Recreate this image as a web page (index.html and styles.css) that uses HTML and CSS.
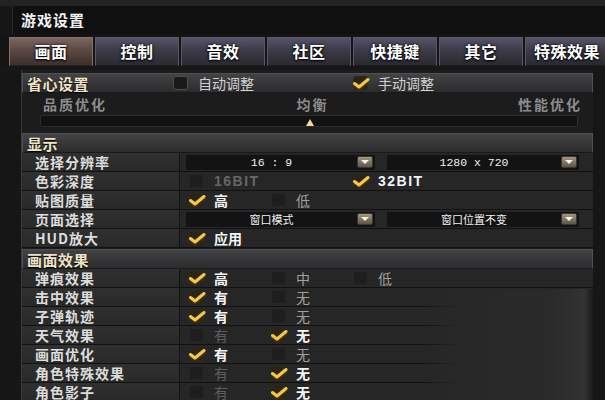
FILE: index.html
```html
<!DOCTYPE html>
<html lang="zh-CN">
<head>
    <meta charset="UTF-8">
    <title>游戏设置</title>
    <link rel="stylesheet" href="styles.css">
</head>
<body>
    <div class="top-strip"></div>
    <div class="titlebar">游戏设置</div>

    <nav class="tabs">
        <div class="tab active">画面</div>
        <div class="tab">控制</div>
        <div class="tab">音效</div>
        <div class="tab">社区</div>
        <div class="tab">快捷键</div>
        <div class="tab">其它</div>
        <div class="tab">特殊效果</div>
    </nav>

    <div class="panel">
        <!-- 省心设置 -->
        <div class="head">
            <div class="head-title">省心设置</div>
            <div class="opt head-opt"><span class="box"></span><span class="off-light">自动调整</span></div>
            <div class="opt head-opt"><span class="box on"><svg class="tick" viewBox="0 0 18 12" width="18" height="12"><path d="M2.5 6.5 L7 10 L16 2.5"/></svg></span><span class="off-light">手动调整</span></div>
        </div>
        <div class="slider">
            <div class="slider-labels">
                <span>品质优化</span>
                <span>均衡</span>
                <span>性能优化</span>
            </div>
            <div class="track"><span class="marker"></span></div>
        </div>

        <!-- 显示 -->
        <div class="head"><div class="head-title">显示</div></div>
        <div class="row">
            <div class="row-label">选择分辨率</div>
            <div class="row-value select">
                <div class="dropdown"><span class="dd-text mono">16 : 9</span><span class="arrow"></span></div>
                <div class="dropdown wide"><span class="dd-text mono">1280 x 720</span><span class="arrow"></span></div>
            </div>
        </div>
        <div class="row">
            <div class="row-label">色彩深度</div>
            <div class="row-value">
                <div class="opt double"><span class="box"></span><span class="bit off">16BIT</span></div>
                <div class="opt"><span class="box on"><svg class="tick" viewBox="0 0 18 12" width="18" height="12"><path d="M2.5 6.5 L7 10 L16 2.5"/></svg></span><span class="bit on-text">32BIT</span></div>
            </div>
        </div>
        <div class="row">
            <div class="row-label">贴图质量</div>
            <div class="row-value">
                <div class="opt"><span class="box on"><svg class="tick" viewBox="0 0 18 12" width="18" height="12"><path d="M2.5 6.5 L7 10 L16 2.5"/></svg></span><span class="on-text">高</span></div>
                <div class="opt"><span class="box"></span><span class="off-light">低</span></div>
            </div>
        </div>
        <div class="row">
            <div class="row-label">页面选择</div>
            <div class="row-value select">
                <div class="dropdown"><span class="dd-text small">窗口模式</span><span class="arrow"></span></div>
                <div class="dropdown wide"><span class="dd-text small">窗口位置不变</span><span class="arrow"></span></div>
            </div>
        </div>
        <div class="row">
            <div class="row-label">HUD放大</div>
            <div class="row-value">
                <div class="opt"><span class="box on"><svg class="tick" viewBox="0 0 18 12" width="18" height="12"><path d="M2.5 6.5 L7 10 L16 2.5"/></svg></span><span class="on-text">应用</span></div>
            </div>
        </div>

        <!-- 画面效果 -->
        <div class="head head-gap"><div class="head-title">画面效果</div></div>
        <div class="effects">
            <div class="row">
                <div class="row-label">弹痕效果</div>
                <div class="row-value">
                    <div class="opt"><span class="box on"><svg class="tick" viewBox="0 0 18 12" width="18" height="12"><path d="M2.5 6.5 L7 10 L16 2.5"/></svg></span><span class="on-text">高</span></div>
                    <div class="opt"><span class="box"></span><span class="off-light">中</span></div>
                    <div class="opt"><span class="box"></span><span class="off-light">低</span></div>
                </div>
            </div>
            <div class="row">
                <div class="row-label">击中效果</div>
                <div class="row-value">
                    <div class="opt"><span class="box on"><svg class="tick" viewBox="0 0 18 12" width="18" height="12"><path d="M2.5 6.5 L7 10 L16 2.5"/></svg></span><span class="on-text">有</span></div>
                    <div class="opt"><span class="box"></span><span class="off-light">无</span></div>
                </div>
            </div>
            <div class="row">
                <div class="row-label">子弹轨迹</div>
                <div class="row-value">
                    <div class="opt"><span class="box on"><svg class="tick" viewBox="0 0 18 12" width="18" height="12"><path d="M2.5 6.5 L7 10 L16 2.5"/></svg></span><span class="on-text">有</span></div>
                    <div class="opt"><span class="box"></span><span class="off-light">无</span></div>
                </div>
            </div>
            <div class="row">
                <div class="row-label">天气效果</div>
                <div class="row-value">
                    <div class="opt"><span class="box"></span><span class="off">有</span></div>
                    <div class="opt"><span class="box on"><svg class="tick" viewBox="0 0 18 12" width="18" height="12"><path d="M2.5 6.5 L7 10 L16 2.5"/></svg></span><span class="on-text">无</span></div>
                </div>
            </div>
            <div class="row">
                <div class="row-label">画面优化</div>
                <div class="row-value">
                    <div class="opt"><span class="box on"><svg class="tick" viewBox="0 0 18 12" width="18" height="12"><path d="M2.5 6.5 L7 10 L16 2.5"/></svg></span><span class="on-text">有</span></div>
                    <div class="opt"><span class="box"></span><span class="off-light">无</span></div>
                </div>
            </div>
            <div class="row">
                <div class="row-label">角色特殊效果</div>
                <div class="row-value">
                    <div class="opt"><span class="box"></span><span class="off">有</span></div>
                    <div class="opt"><span class="box on"><svg class="tick" viewBox="0 0 18 12" width="18" height="12"><path d="M2.5 6.5 L7 10 L16 2.5"/></svg></span><span class="on-text">无</span></div>
                </div>
            </div>
            <div class="row">
                <div class="row-label">角色影子</div>
                <div class="row-value">
                    <div class="opt"><span class="box"></span><span class="off">有</span></div>
                    <div class="opt"><span class="box on"><svg class="tick" viewBox="0 0 18 12" width="18" height="12"><path d="M2.5 6.5 L7 10 L16 2.5"/></svg></span><span class="on-text">无</span></div>
                </div>
            </div>
            <div class="blur"></div>
        </div>
    </div>
</body>
</html>
```

FILE: styles.css
```css
* {
    margin: 0;
    padding: 0;
    box-sizing: border-box;
}

body {
    width: 605px;
    height: 400px;
    overflow: hidden;
    background: #161616;
    font-family: "Noto Sans CJK SC", "Noto Sans", sans-serif;
    color: #ddd;
}

.top-strip {
    height: 6px;
    background: #232323;
}

.titlebar {
    height: 28px;
    margin-left: 12px;
    padding-left: 8px;
    background: #101010;
    border-left: 1px solid #2a2a2a;
    color: #f2f2f2;
    font-size: 15px;
    font-weight: bold;
    line-height: 28px;
    letter-spacing: 1px;
}

/* tabs */
.tabs {
    display: flex;
    gap: 2px;
    padding: 3px 0 0 9px;
    background: #141414;
}

.tab {
    flex: 0 0 84px;
    height: 29px;
    border: 1px solid #5b5966;
    border-bottom-color: #1e1e22;
    background: linear-gradient(#56536a 0%, #3d3b48 45%, #2a2930 100%);
    color: #fff;
    font-size: 16px;
    font-weight: bold;
    text-align: center;
    line-height: 27px;
    letter-spacing: 0.5px;
    text-shadow: 0 1px 2px #000, 0 0 3px #000;
}

.tab.active {
    border-color: #86706a;
    border-bottom-color: #2a2020;
    background: linear-gradient(#7d6660 0%, #5c4843 45%, #3c2f2c 100%);
}

/* main panel */
.panel {
    margin: 4px 12px 0 21px;
    border-left: 1px solid #3a3a3a;
    background: #1c1c1c;
    padding-top: 3px;
}

.head {
    height: 20px;
    display: flex;
    align-items: center;
    padding-left: 4px;
    background: linear-gradient(#434345, #2c2c2e);
    border: 1px solid #505052;
    border-bottom-color: #1a1a1a;
    color: #efe4c6;
    font-size: 15px;
    font-weight: bold;
}

.head-gap {
    margin-top: 1px;
}

.head-title {
    width: 146px;
    letter-spacing: 0.5px;
    text-shadow: 0 1px 1px #000;
}

.head .opt {
    width: 180px;
    font-weight: normal;
    font-size: 14px;
}

/* slider */
.slider {
    height: 40px;
    padding-top: 1px;
}

.slider-labels {
    display: flex;
    justify-content: space-between;
    padding: 0 11px 0 21px;
    height: 20px;
    line-height: 20px;
    color: #8c8c8c;
    font-size: 14px;
    font-weight: bold;
    letter-spacing: 2px;
}

.track {
    position: relative;
    height: 12px;
    margin: 1px 15px 0 18px;
    background: #111;
    border: 1px solid #2c2c2c;
    border-radius: 2px;
}

.marker {
    position: absolute;
    left: 265px;
    bottom: 0;
    border-left: 4px solid transparent;
    border-right: 4px solid transparent;
    border-bottom: 7px solid #f3d98e;
}

/* rows */
.row {
    display: flex;
    height: 19px;
    border-bottom: 1px solid #121212;
}

.row-label {
    width: 158px;
    padding-left: 13px;
    background: linear-gradient(#303030, #292929);
    border-right: 1px solid #141414;
    color: #dcdcdc;
    font-size: 14px;
    font-weight: bold;
    line-height: 18px;
    letter-spacing: 1px;
    white-space: nowrap;
}

.row-value {
    flex: 1;
    display: flex;
    align-items: center;
    padding-left: 9px;
    background: #262626;
}

.row-value.select {
    padding-left: 6px;
    gap: 12px;
}

/* options */
.opt {
    width: 82px;
    display: flex;
    align-items: center;
    gap: 10px;
    font-size: 14px;
    line-height: 18px;
}

.opt.double {
    width: 164px;
}

.box {
    position: relative;
    flex: 0 0 15px;
    height: 14px;
    border: 1px solid #262626;
    border-radius: 2px;
    background: #1e1e1e;
}

.head .box {
    border-color: #4e4e4e;
    border-radius: 3px;
    background: #1a1a1a;
}

.box.on {
    border-color: #2e2818;
    background: #2a2417;
}

.tick {
    position: absolute;
    left: -2px;
    top: 0;
    fill: none;
    stroke: #f4c84a;
    stroke-width: 3;
    stroke-linecap: round;
    stroke-linejoin: round;
    filter: drop-shadow(0 1px 1px #5a3c10);
}

.on-text {
    color: #f4f4f4;
    font-weight: bold;
}

.off {
    color: #5e5e5e;
}

.off-light {
    color: #a0a0a0;
}

.head .off-light {
    color: #d0d0d0;
}

.bit {
    font-family: "Liberation Sans", Arial, sans-serif;
    font-weight: bold;
    font-size: 14px;
    letter-spacing: 1.5px;
}

.bit.off {
    color: #666;
}

/* dropdowns */
.dropdown {
    width: 189px;
    height: 15px;
    display: flex;
    align-items: center;
    background: #131313;
}

.dropdown.wide {
    width: 192px;
}

.dd-text {
    flex: 1;
    text-align: center;
    color: #f0f0f0;
    white-space: nowrap;
}

.dd-text.mono {
    font-family: "Liberation Mono", "DejaVu Sans Mono", monospace;
    font-size: 11.5px;
}

.dd-text.small {
    font-size: 11px;
}

.arrow {
    width: 16px;
    height: 12px;
    margin-right: 2px;
    display: flex;
    align-items: center;
    justify-content: center;
    background: linear-gradient(#a09583, #5d564c);
    border: 1px solid #3a3630;
    border-radius: 2px;
}

.arrow::after {
    content: "";
    border-top: 4px solid #fff6dc;
    border-left: 4px solid transparent;
    border-right: 4px solid transparent;
}

/* blurred right side of the effects area */
.effects {
    position: relative;
}

.blur {
    position: absolute;
    left: 400px;
    right: 0;
    top: 20px;
    bottom: 0;
    background: linear-gradient(to right, rgba(40, 40, 40, 0), #282828 40px, #2a2a2a 75%, #323232 95%, #1a1a1a);
}
```
